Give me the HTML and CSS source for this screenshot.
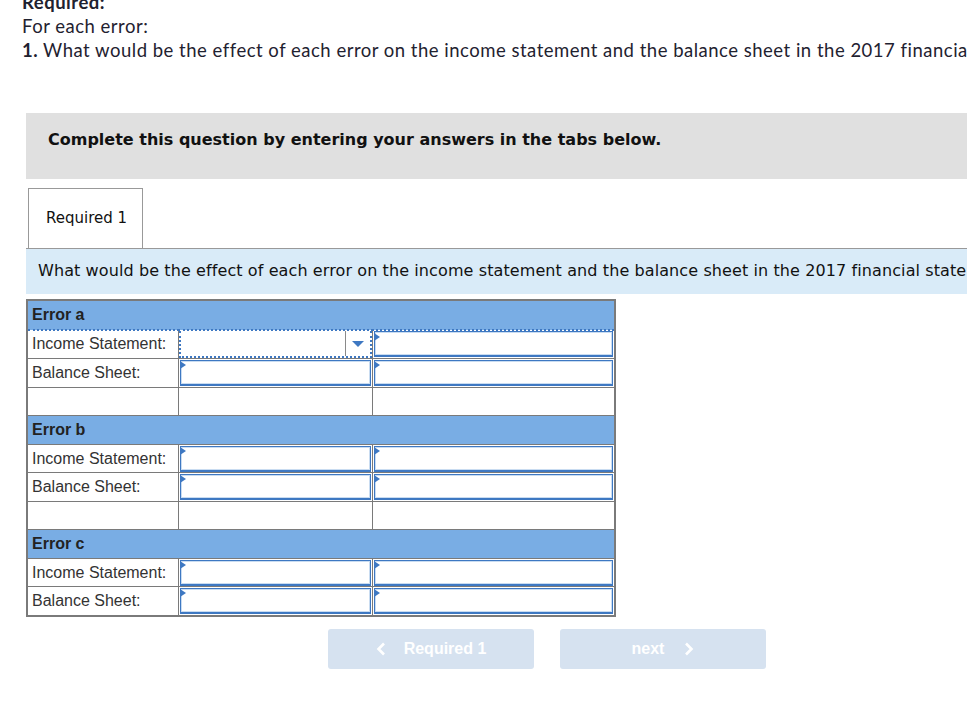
FILE: index.html
```html
<!DOCTYPE html>
<html lang="en">
<head>
    <meta charset="UTF-8">
    <title>Required</title>
    <link rel="stylesheet" href="styles.css">
</head>
<body>
    <div class="question">
        <p class="req-title">Required:</p>
        <p>For each error:</p>
        <p><b>1.</b> What would be the effect of each error on the income statement and the balance sheet in the 2017 financial statements?</p>
    </div>

    <div class="instructions">Complete this question by entering your answers in the tabs below.</div>

    <div class="tabs">
        <div class="tab">Required 1</div>
    </div>
    <div class="tab-prompt">What would be the effect of each error on the income statement and the balance sheet in the 2017 financial statements?</div>

    <table class="grid">
        <tr class="head focus-row"><td colspan="3">Error a</td></tr>
        <tr class="focus-row">
            <td class="label">Income Statement:</td>
            <td class="cell"><div class="select"><span class="caret"></span></div></td>
            <td class="cell"><div class="field"></div></td>
        </tr>
        <tr>
            <td class="label">Balance Sheet:</td>
            <td class="cell"><div class="field"></div></td>
            <td class="cell"><div class="field"></div></td>
        </tr>
        <tr class="blank"><td></td><td></td><td></td></tr>

        <tr class="head"><td colspan="3">Error b</td></tr>
        <tr>
            <td class="label">Income Statement:</td>
            <td class="cell"><div class="field"></div></td>
            <td class="cell"><div class="field"></div></td>
        </tr>
        <tr>
            <td class="label">Balance Sheet:</td>
            <td class="cell"><div class="field"></div></td>
            <td class="cell"><div class="field"></div></td>
        </tr>
        <tr class="blank"><td></td><td></td><td></td></tr>

        <tr class="head"><td colspan="3">Error c</td></tr>
        <tr>
            <td class="label">Income Statement:</td>
            <td class="cell"><div class="field"></div></td>
            <td class="cell"><div class="field"></div></td>
        </tr>
        <tr>
            <td class="label">Balance Sheet:</td>
            <td class="cell"><div class="field"></div></td>
            <td class="cell"><div class="field"></div></td>
        </tr>
    </table>

    <div class="nav">
        <button class="nav-btn prev" disabled>
            <svg class="chev" width="10" height="14" viewBox="0 0 10 14"><path d="M8 1.5 L2.5 7 L8 12.5" fill="none" stroke="#fff" stroke-width="2.6"/></svg>
            Required 1
        </button>
        <button class="nav-btn next" disabled>
            next
            <svg class="chev" width="10" height="14" viewBox="0 0 10 14"><path d="M2 1.5 L7.5 7 L2 12.5" fill="none" stroke="#fff" stroke-width="2.6"/></svg>
        </button>
    </div>
</body>
</html>
```

FILE: styles.css
```css
html, body {
    margin: 0;
    background-color: #fff;
    overflow: hidden;
}
body {
    width: 967px;
}
.question {
    font-family: 'Lato', sans-serif;
    font-size: 18.5px;
    letter-spacing: 0.5px;
    line-height: 24px;
    color: #1f2230;
    margin-top: -10px;
    padding-left: 22px;
    overflow: hidden;
}
.question p {
    margin: 0;
    white-space: nowrap;
}
.req-title {
    font-weight: bold;
}
.instructions {
    margin: 51px 0 0 26px;
    height: 66px;
    box-sizing: border-box;
    padding: 14px 0 0 22px;
    line-height: 26px;
    background-color: #e0e0e0;
    font-family: 'DejaVu Sans', Verdana, sans-serif;
    font-weight: bold;
    font-size: 16px;
    color: #111;
    white-space: nowrap;
    overflow: hidden;
}
.tabs {
    margin: 9px 0 0 28px;
    display: flex;
}
.tab {
    width: 115px;
    height: 60px;
    box-sizing: border-box;
    border: 1px solid #999;
    border-bottom: none;
    background: #fff;
    font-family: 'DejaVu Sans', Verdana, sans-serif;
    font-size: 15px;
    color: #111;
    line-height: 59px;
    padding-left: 17px;
}
.tab-prompt {
    margin-left: 26px;
    height: 45px;
    border-top: 1px solid #999;
    background-color: #d9ebf8;
    font-family: 'DejaVu Sans', Verdana, sans-serif;
    font-size: 16px;
    letter-spacing: 0.1px;
    color: #111;
    line-height: 44px;
    padding-left: 12px;
    white-space: nowrap;
    overflow: hidden;
}
.grid {
    margin: 5px 0 0 26px;
    border-collapse: collapse;
    border: 2px solid #7a7a7a;
    font-family: 'Liberation Sans', Arial, sans-serif;
    font-size: 16px;
    color: #222;
}
.grid td {
    border: 1px solid #7a7a7a;
    height: 27.55px;
    padding: 0;
}
.grid td:nth-child(1) { width: 146px; }
.grid td:nth-child(2) { width: 193px; }
.grid td:nth-child(3) { width: 241px; }
.head td {
    background-color: #79ade4;
    font-weight: bold;
    padding-left: 4px;
    color: #222;
}
.grid tr.head.focus-row td {
    border-bottom: 2px dotted #3e78c2;
}
.label {
    padding-left: 4px !important;
    color: #333;
}
.cell {
    position: relative;
}
.field {
    height: 23px;
    margin: 0 1px;
    border: 1px solid #3e78c2;
    border-bottom-width: 2px;
    box-shadow: inset 0 0 0 1px #c9dcf1;
    background: #fff;
}
.cell::before {
    content: "";
    position: absolute;
    left: 1px;
    top: 2px;
    border-left: 6px solid #3e78c2;
    border-top: 4px solid transparent;
    border-bottom: 4px solid transparent;
}
.focus-row .cell:nth-child(2)::before {
    display: none;
}
.select {
    position: relative;
    height: 25px;
    border: 2px dotted #3e78c2;
    border-top: none;
    background: #fff;
}
.caret {
    position: absolute;
    right: 0;
    top: 0;
    width: 24px;
    height: 25px;
    border-left: 1px solid #8a8a8a;
}
.caret::after {
    content: "";
    position: absolute;
    left: 6px;
    top: 10px;
    border-top: 6px solid #3e78c2;
    border-left: 6px solid transparent;
    border-right: 6px solid transparent;
}
.nav {
    display: flex;
    gap: 26px;
    margin: 12px 0 0 328px;
}
.nav-btn {
    display: flex;
    align-items: center;
    justify-content: center;
    width: 206px;
    height: 40px;
    border: none;
    border-radius: 3px;
    background-color: #d6e2f0;
    color: #fff;
    font-family: 'Liberation Sans', Arial, sans-serif;
    font-weight: bold;
    font-size: 16px;
}
.prev .chev {
    margin-right: 18px;
}
.next .chev {
    margin-left: 20px;
}
```
